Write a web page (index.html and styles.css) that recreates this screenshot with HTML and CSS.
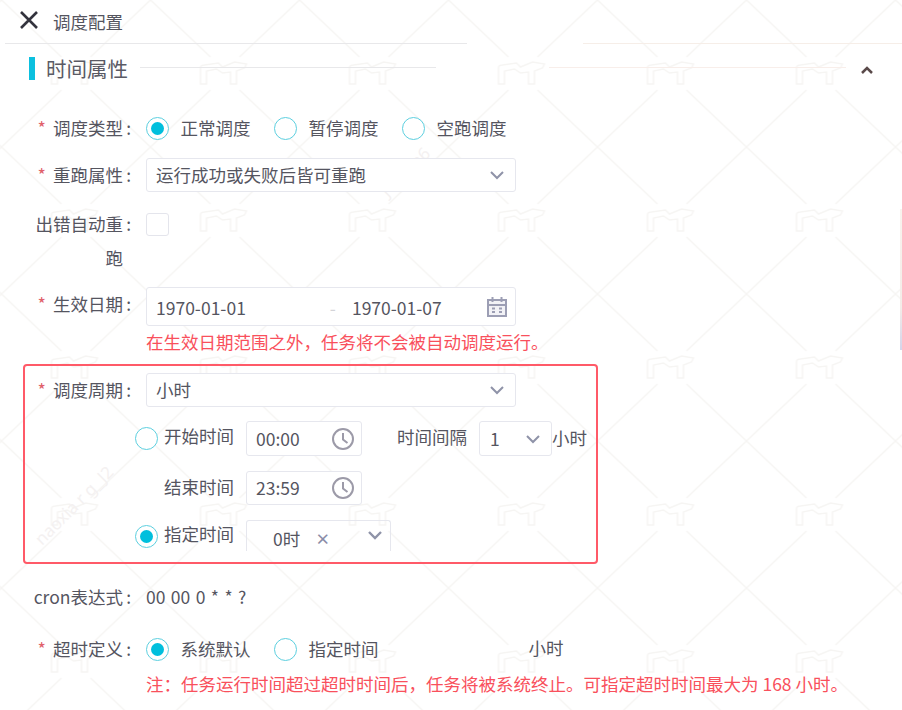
FILE: index.html
```html
<!DOCTYPE html>
<html lang="zh-CN">
<head>
<meta charset="utf-8">
<title>调度配置</title>
<link rel="stylesheet" href="styles.css">
</head>
<body>
<svg class="watermark" width="902" height="710" aria-hidden="true">
  <defs>
    <pattern id="wm" x="1.5" y="0" width="149" height="147" patternUnits="userSpaceOnUse">
      <path class="wm-line" d="M0 0L60 57M149 0L89 57M0 147L60 90M149 147L89 90"/>
      <path class="wm-line" d="M50 84V68Q50 65 54 65L68 63L72 67L84 62L96 64L94 68L86 71V84H80V72L72 73L66 69L56 71V84Z"/>
    </pattern>
  </defs>
  <rect width="902" height="710" fill="url(#wm)"/>
  <text class="wm-text" transform="translate(42 546) rotate(-45)">naoxia r g_J2</text>
  <text class="wm-text" transform="translate(388 198) rotate(-45)">JOX I a6</text>
</svg>
<i class="edge"></i>

<header class="topbar">
  <svg class="close" width="18" height="18" viewBox="0 0 18 18"><path d="M1 1L17 17M17 1L1 17"/></svg>
  <span class="topbar-title">调度配置</span>
</header>
<div class="split-rule">
  <i class="seg seg-a"></i><i class="seg seg-b"></i>
</div>

<section class="section-head">
  <i class="bar"></i>
  <h2 class="section-title">时间属性</h2>
  <i class="head-line head-line-a"></i>
  <i class="head-line head-line-b"></i>
  <svg class="collapse" width="14" height="8" viewBox="0 0 14 8"><path d="M2 7L7 2L12 7"/></svg>
</section>

<main class="form">
  <div class="row row-type">
    <label class="label"><b class="star">*</b>调度类型<span class="colon">:</span></label>
    <div class="radios">
      <span class="radio on"></span><span class="radio-text">正常调度</span>
      <span class="radio"></span><span class="radio-text">暂停调度</span>
      <span class="radio"></span><span class="radio-text">空跑调度</span>
    </div>
  </div>

  <div class="row row-rerun">
    <label class="label"><b class="star">*</b>重跑属性<span class="colon">:</span></label>
    <div class="field select">
      <span>运行成功或失败后皆可重跑</span>
      <svg class="chev" width="16" height="10" viewBox="0 0 16 10"><path d="M2 2L8 8L14 2"/></svg>
    </div>
  </div>

  <div class="row row-retry">
    <label class="label">出错自动重<span class="colon">:</span><br>跑</label>
    <span class="checkbox"></span>
  </div>

  <div class="row row-date">
    <label class="label"><b class="star">*</b>生效日期<span class="colon">:</span></label>
    <div class="field date">
      <span class="date-a">1970-01-01</span>
      <span class="date-dash">-</span>
      <span class="date-b">1970-01-07</span>
      <svg class="cal" width="22" height="22" viewBox="0 0 22 22"><path d="M2 4H20V20H2ZM2 9H20M6.500 1V6M15.500 1V6"/><path class="cal-dots" d="M6 12.500H9M13 12.500H16M6 16H9M13 16H16"/></svg>
    </div>
  </div>
  <p class="warn warn-date">在生效日期范围之外，任务将不会被自动调度运行。</p>

  <div class="cycle-box">
    <div class="row">
      <label class="label label-inner"><b class="star">*</b>调度周期<span class="colon">:</span></label>
      <div class="field select">
        <span>小时</span>
        <svg class="chev" width="16" height="10" viewBox="0 0 16 10"><path d="M2 2L8 8L14 2"/></svg>
      </div>
    </div>

    <div class="time-row time-start">
      <span class="radio radio-inner"></span>
      <span class="time-label">开始时间</span>
      <div class="field time">
        <span>00:00</span>
        <svg class="clock" width="24" height="24" viewBox="0 0 24 24"><circle cx="12" cy="12" r="10"/><path d="M12 6V12.500L16.500 16"/></svg>
      </div>
      <span class="interval-label">时间间隔</span>
      <div class="field interval">
        <span>1</span>
        <svg class="chev" width="16" height="10" viewBox="0 0 16 10"><path d="M2 2L8 8L14 2"/></svg>
      </div>
      <span class="unit">小时</span>
    </div>

    <div class="time-row time-end">
      <span class="radio-blank"></span>
      <span class="time-label">结束时间</span>
      <div class="field time time-short">
        <span>23:59</span>
        <svg class="clock" width="24" height="24" viewBox="0 0 24 24"><circle cx="12" cy="12" r="10"/><path d="M12 6V12.500L16.500 16"/></svg>
      </div>
    </div>

    <div class="time-row time-pick">
      <span class="radio radio-inner on"></span>
      <span class="time-label">指定时间</span>
      <div class="multi">
        <span class="tag">0时</span>
        <span class="tag-x">×</span>
        <svg class="chev" width="16" height="10" viewBox="0 0 16 10"><path d="M2 2L8 8L14 2"/></svg>
      </div>
    </div>
  </div>

  <div class="row row-cron">
    <label class="label">cron表达式<span class="colon">:</span></label>
    <span class="cron-value">00 00 0 * * ?</span>
  </div>

  <div class="row row-timeout">
    <label class="label"><b class="star">*</b>超时定义<span class="colon">:</span></label>
    <div class="radios radios-timeout">
      <span class="radio on"></span><span class="radio-text">系统默认</span>
      <span class="radio"></span><span class="radio-text">指定时间</span>
      <span class="timeout-unit">小时</span>
    </div>
  </div>
  <p class="warn warn-note">注：任务运行时间超过超时时间后，任务将被系统终止。可指定超时时间最大为 168 小时。</p>
</main>
</body>
</html>
```
FILE: styles.css
```css
* { box-sizing: border-box; }
html, body { margin: 0; padding: 0; }
body {
  position: relative;
  width: 902px;
  height: 710px;
  overflow: hidden;
  background: #fff;
  color: #55555f;
  font-family: "Noto Sans CJK SC", "Noto Sans", sans-serif;
  font-size: 17.5px;
  line-height: 34px;
}
.watermark { position: absolute; left: 0; top: 0; z-index: 0; }
.wm-line { fill: none; stroke: #f6f5f3; stroke-width: 1.5; }
.wm-text { fill: #f4f1f1; font-size: 17px; font-family: "Noto Sans", sans-serif; }
.edge {
  position: absolute;
  right: 0;
  top: 209px;
  width: 2px;
  height: 141px;
  background: linear-gradient(#f8f3ee, #f3ece8 70%, #d4d4ea);
}
.topbar, .split-rule, .section-head, .form { position: relative; z-index: 1; }

.topbar { display: flex; align-items: center; height: 43px; padding-left: 20px; }
.close { flex: none; margin-top: -3px; }
.close path { fill: none; stroke: #33333d; stroke-width: 2.600; }
.topbar-title { margin-left: 15px; line-height: 42px; }

.split-rule { display: flex; height: 1px; padding-left: 5px; }
.seg { display: block; height: 1px; }
.seg-a { width: 462px; background: #e8e8ea; }
.seg-b { width: 319px; margin-left: 116px; background: #f6eee8; }

.section-head { display: flex; height: 23px; margin-top: 13px; padding-left: 29px; }
.bar { display: block; width: 6px; height: 23px; background: #0cc0df; }
.section-title { margin: 0 0 0 11px; font-size: 20.5px; font-weight: 400; line-height: 23px; color: #5a5a64; }
.head-line { display: block; height: 1px; margin-top: 10px; }
.head-line-a { width: 296px; margin-left: 12px; background: #e8e8ea; }
.head-line-b { width: 297px; margin-left: 113px; background: #f8eeea; }
.collapse { flex: none; margin: 9px 0 0 14px; }
.collapse path { fill: none; stroke: #5a4a4a; stroke-width: 2.500; }

.form { padding-top: 31px; }
.row { display: flex; align-items: flex-start; }
.label { flex: none; width: 146px; padding-right: 23px; text-align: right; color: #55555f; }
.label-inner { width: 121px; }
.star { margin-right: 7px; font-weight: 400; font-size: 18px; line-height: 0; color: #e0606a; }
.colon { display: inline-block; width: 8px; margin-right: -8px; text-align: right; line-height: 0; }

.radios { display: flex; align-items: center; height: 34px; margin-left: -0.500px; }
.radio {
  flex: none;
  display: flex;
  align-items: center;
  justify-content: center;
  width: 23px;
  height: 23px;
  border: 1.500px solid #5ccfdf;
  border-radius: 50%;
  background: #fff;
}
.radio.on::after { content: ""; width: 13px; height: 13px; border-radius: 50%; background: #00bfdd; }
.radio-text { margin: 0 23px 0 12px; }
.timeout-unit { margin-left: 127px; margin-top: -2px; }

.row-rerun { margin-top: 13px; }
.row-retry { margin-top: 15px; height: 68px; }
.row-date { margin-top: 12px; }
.row-cron { margin-top: 16px; }
.row-timeout { margin-top: 18px; }

.field {
  display: flex;
  align-items: center;
  flex: none;
  border: 1px solid #e6e7ee;
  border-radius: 3px;
  background: #fff;
}
.select { justify-content: space-between; width: 370px; height: 34px; padding: 0 10px 0 9px; }
.checkbox {
  display: block;
  width: 23px;
  height: 23px;
  margin-top: 6px;
  border: 1px solid #e4e5ec;
  border-radius: 3px;
}
.chev { flex: none; }
.chev path { fill: none; stroke: #8f93a8; stroke-width: 2; }

.date { width: 370px; height: 39px; padding-left: 9px; padding-top: 3px; }
.date-dash { margin-left: 84px; color: #d4d4d8; }
.date-b { margin-left: 16px; }
.cal { flex: none; margin-left: 44px; margin-top: -3px; }
.cal path { fill: #f2f2f6; stroke: #9c9eb4; stroke-width: 2; }
.cal .cal-dots { stroke-width: 2; }

.warn { margin: 0; color: #f9505c; line-height: 24px; white-space: nowrap; }
.warn-date { margin: 4px 0 0 146px; }
.warn-note { margin: 6px 0 0 146px; }

.cycle-box {
  width: 575px;
  height: 200px;
  margin: 10px 0 0 23px;
  padding-top: 7px;
  border: 2px solid #ff5a68;
  border-radius: 4px;
}
.time-row { display: flex; align-items: center; padding-left: 110px; }
.time-start { margin-top: 14px; height: 35px; }
.time-end { margin-top: 15px; height: 34px; }
.time-pick { margin-top: 15px; align-items: flex-start; height: 31px; }
.radio-inner { margin-right: 6px; }
.time-pick .radio-inner { margin-top: 5px; }
.radio-blank { flex: none; width: 23px; margin-right: 6px; }
.time-label { flex: none; width: 70px; margin-right: 12px; margin-top: -5px; }
.time-end .time-label { margin-top: -3px; }
.time-pick .time-label { margin-top: -3px; }
.time { justify-content: space-between; width: 116px; height: 35px; padding: 0 6px 0 9px; }
.time-short { height: 34px; }
.clock { flex: none; }
.clock circle, .clock path { fill: none; stroke: #9c9aa8; stroke-width: 2; }
.interval-label { flex: none; margin-left: 35px; margin-top: -4px; }
.interval { justify-content: space-between; width: 73px; height: 35px; margin-left: 12px; padding: 0 10px; }
.unit { flex: none; margin-top: -2px; }

.multi {
  position: relative;
  display: flex;
  align-items: center;
  width: 145px;
  height: 31px;
  padding: 6px 0 0 26px;
  border: 1px solid #e6e7ee;
  border-bottom: 0;
  border-radius: 3px 3px 0 0;
}
.tag { flex: none; }
.tag-x { flex: none; margin-left: 15px; color: #8a8ca8; font-size: 15px; font-weight: 700; }
.multi .chev { margin-left: 37px; margin-top: -8px; }
.multi .chev path { stroke-width: 2.400; }

.cron-value { flex: none; word-spacing: 1.500px; }
```
